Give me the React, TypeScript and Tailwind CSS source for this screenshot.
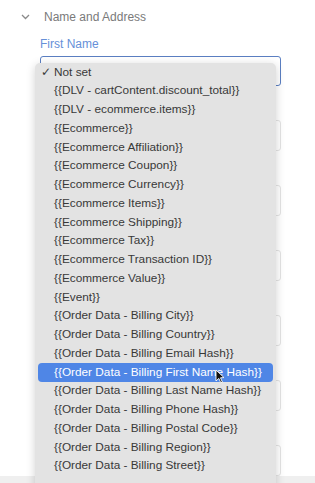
import React from "react";

const options: string[] = [
    "Not set",
    "{{DLV - cartContent.discount_total}}",
    "{{DLV - ecommerce.items}}",
    "{{Ecommerce}}",
    "{{Ecommerce Affiliation}}",
    "{{Ecommerce Coupon}}",
    "{{Ecommerce Currency}}",
    "{{Ecommerce Items}}",
    "{{Ecommerce Shipping}}",
    "{{Ecommerce Tax}}",
    "{{Ecommerce Transaction ID}}",
    "{{Ecommerce Value}}",
    "{{Event}}",
    "{{Order Data - Billing City}}",
    "{{Order Data - Billing Country}}",
    "{{Order Data - Billing Email Hash}}",
    "{{Order Data - Billing First Name Hash}}",
    "{{Order Data - Billing Last Name Hash}}",
    "{{Order Data - Billing Phone Hash}}",
    "{{Order Data - Billing Postal Code}}",
    "{{Order Data - Billing Region}}",
    "{{Order Data - Billing Street}}",
];

const HIGHLIGHTED = 16;

const Cursor: React.FC = () => (
    <svg width="10" height="15" viewBox="0 0 10 15" className="absolute left-[177px] top-[6px]">
        <path d="M1 1 L1 12 L3.8 9.4 L5.8 13.8 L7.4 13.1 L5.5 8.8 L9 8.6 Z" fill="#111" stroke="#fff" strokeWidth="0.9" strokeLinejoin="round" />
    </svg>
);

const App: React.FC = () => {
    return (
        <div className="relative w-[315px] h-[483px] overflow-hidden bg-white flex flex-col font-['Liberation_Sans',Arial,sans-serif]">
            <div className="flex-1">
                <div className="flex items-center h-[34px] pl-[21px] text-[12px] text-[#7a7a7a]">
                    <svg width="9" height="6" viewBox="0 0 9 6" className="mr-[14px]">
                        <path d="M1 1 L4.5 4.5 L8 1" fill="none" stroke="#8a8a8a" strokeWidth="1.3" />
                    </svg>
                    <span>Name and Address</span>
                </div>
                <div className="pl-[40px] pr-[34px]">
                    <div className="text-[12px] leading-[18px] text-[#6690d8] mt-[1px]">First Name</div>
                    <div className="h-[30px] mt-[3px] rounded-[3px] border border-[#5b7fc2]" />
                    {[0, 1, 2, 3, 4, 5].map((i) => (
                        <div key={i} className="h-[31px] mt-[34px] rounded-[3px] border border-[#e4e4e4]" />
                    ))}
                </div>
            </div>
            <div className="h-[11px] bg-[#efefef]" />

            <div className="absolute left-[35px] top-[63px] w-[241px] h-[440px] rounded-[5px] bg-[#e3e3e3] shadow-[0_2px_10px_rgba(0,0,0,0.18)] px-[3px]">
                {options.map((label, i) => (
                    <div
                        key={i}
                        className={
                            "relative flex items-center h-[18.75px] rounded-[4px] text-[11.8px] " +
                            (i === HIGHLIGHTED ? "bg-[#4f86e6] text-white" : "text-[#383838]")
                        }
                    >
                        <span className="w-[16px] pl-[3px] text-[12px] font-['DejaVu_Sans',sans-serif]">{i === 0 ? "✓" : ""}</span>
                        <span>{label}</span>
                        {i === HIGHLIGHTED && <Cursor />}
                    </div>
                ))}
            </div>
        </div>
    );
};

export default App;
